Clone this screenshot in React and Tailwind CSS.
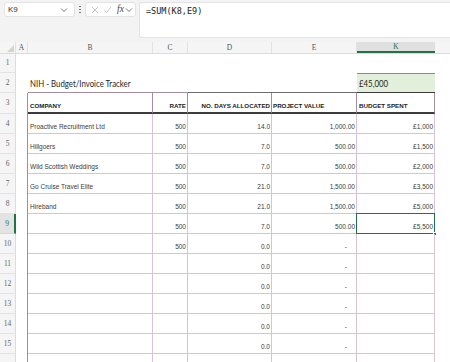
import React from "react";

const GRID = "grid grid-cols-[16px_12px_125px_35px_84px_85px_78px_1fr]";
const HL = "border-b border-[#d8c3d2]";
const VR = "border-r border-[#a48e9e]";

function Chevron({ className = "" }) {
  return (
    <svg width="8" height="6" viewBox="0 0 8 6" className={className}>
      <path d="M1 1.5 L4 4.5 L7 1.5" fill="none" stroke="#666" strokeWidth="0.9" />
    </svg>
  );
}

function TopBar() {
  return (
    <div className="h-[42px] bg-[#f3f3f3] flex items-start pt-[2px] pl-[4px] text-[8px] leading-none">
      <div className="w-[71px] h-[15px] bg-white border border-[#e3e3e3] rounded-[3px] flex items-center justify-between pl-[3px] pr-[6px]">
        <span className="text-[8px] leading-none text-[#333] font-['Liberation_Sans',sans-serif]">K9</span>
        <Chevron />
      </div>
      <div className="w-[8px] h-[15px] flex flex-col items-center justify-center gap-[1.5px] ml-[1px]">
        <span className="w-[1.5px] h-[1.5px] bg-[#666] rounded-full" />
        <span className="w-[1.5px] h-[1.5px] bg-[#666] rounded-full" />
        <span className="w-[1.5px] h-[1.5px] bg-[#666] rounded-full" />
      </div>
      <div className="w-[51px] h-[15px] bg-white border border-[#e3e3e3] rounded-[3px] flex items-center pl-[5px] ml-[1px]">
        <svg width="8" height="8" viewBox="0 0 8 8">
          <path d="M1 1 L7 7 M7 1 L1 7" stroke="#b8b8b8" strokeWidth="0.8" />
        </svg>
        <svg width="9" height="8" viewBox="0 0 9 8" className="ml-[4px]">
          <path d="M1 4.2 L3.4 6.8 L8 1" fill="none" stroke="#b8b8b8" strokeWidth="0.8" />
        </svg>
        <span className="ml-[5px] text-[9.5px] italic text-[#444] font-['Liberation_Serif',serif] leading-none">
          fx
        </span>
        <Chevron className="ml-[1px]" />
      </div>
      <div className="flex-1 h-[36px] bg-white border border-r-0 border-[#e3e3e3] rounded-l-[3px] ml-[3px] pl-[6px] pt-[4px] text-[8px] leading-none">
        <span className="text-[8.5px] leading-none text-[#222] font-['DejaVu_Sans_Mono',monospace]">=SUM(K8,E9)</span>
      </div>
    </div>
  );
}

function ColHeader() {
  const base =
    "h-[11px] flex items-center justify-center text-[7.5px] leading-none text-[#555] font-['Liberation_Serif',serif] border-r border-[#e2e2e2]";
  return (
    <div className={`${GRID} bg-[#f5f5f5] border-b border-[#dcdcdc]`}>
      <div className="h-[11px] relative border-r border-[#e2e2e2]">
        <svg width="7" height="7" viewBox="0 0 7 7" className="absolute right-[1px] bottom-[1px]">
          <path d="M7 0 L7 7 L0 7 Z" fill="#d4d4d4" />
        </svg>
      </div>
      <div className={base}>A</div>
      <div className={base}>B</div>
      <div className={base}>C</div>
      <div className={base}>D</div>
      <div className={base}>E</div>
      <div className="h-[11px] flex items-center justify-center text-[7.5px] leading-none text-[#217346] font-['Liberation_Serif',serif] bg-[#e0e0e0] border-b-2 border-[#217346]">
        K
      </div>
      <div className="h-[11px]" />
    </div>
  );
}

function RowHead({ n, sel, h }) {
  return (
    <div
      className={`${h} flex items-center justify-center text-[7.5px] leading-none font-['Liberation_Serif',serif] border-b ${
        sel
          ? "bg-[#e3e3e3] text-[#217346] border-r-2 border-r-[#217346] border-b-[#d6d6d6]"
          : "bg-[#f5f5f5] text-[#666] border-r border-r-[#dcdcdc] border-b-[#e3e3e3]"
      }`}
    >
      {n}
    </div>
  );
}

const data = [
  ["Proactive Recruitment Ltd", "500", "14.0", "1,000.00", "£1,000"],
  ["Hillgoers", "500", "7.0", "500.00", "£1,500"],
  ["Wild Scottish Weddings", "500", "7.0", "500.00", "£2,000"],
  ["Go Cruise Travel Elite", "500", "21.0", "1,500.00", "£3,500"],
  ["Hireband", "500", "21.0", "1,500.00", "£5,000"],
  ["", "500", "7.0", "500.00", "£5,500"],
  ["", "500", "0.0", "-", ""],
  ["", "", "0.0", "-", ""],
  ["", "", "0.0", "-", ""],
  ["", "", "0.0", "-", ""],
  ["", "", "0.0", "-", ""],
  ["", "", "0.0", "-", ""],
];

const cellText = "text-[6.5px] text-[#3a3a3a] font-['Liberation_Sans',sans-serif] leading-none whitespace-nowrap";

function DataRow({ row, n, label = true }) {
  const sel = n === 9;
  const [b, c, d, e, k] = row;
  const cell = `h-[20px] flex items-end pb-[3px] ${HL} ${VR} ${cellText}`;
  return (
    <div className={GRID}>
      <RowHead n={label ? n : ""} sel={sel} h="h-[20px]" />
      <div className={`h-[20px] ${VR}`} />
      <div className={`${cell} pl-[2px]`}>{b}</div>
      <div className={`${cell} justify-end pr-[1px]`}>{c}</div>
      <div className={`${cell} justify-end pr-[1px]`}>{d}</div>
      <div className={`${cell} justify-end ${e === "-" ? "pr-[9px]" : "pr-[1px]"}`}>{e}</div>
      <div className={`${cell} justify-end pr-[1px] relative`}>
        {k}
        {sel && (
          <>
            <div className="absolute left-[-1px] top-[-1px] right-[-1px] bottom-[-1px] border border-[#217346]" />
            <div className="absolute right-[-3px] bottom-[-3px] w-[4px] h-[4px] bg-[#217346] border border-white" />
          </>
        )}
      </div>
      <div className="h-[20px]" />
    </div>
  );
}

export default function App() {
  const title =
    "inline-block origin-left scale-x-[0.8] text-[9.8px] text-[#1f1f1f] font-['Lato',sans-serif] leading-none whitespace-nowrap";
  const head =
    "h-[21px] flex items-end pb-[3px] text-[6.2px] font-bold text-[#222] font-['Liberation_Sans',sans-serif] leading-none whitespace-nowrap border-b-2 border-b-[#3c3c3c] border-r border-r-[#a48e9e]";
  return (
    <div className="w-[450px] h-[362px] overflow-hidden bg-white">
      <TopBar />
      <ColHeader />
      {/* Row 1 */}
      <div className={GRID}>
        <RowHead n={1} h="h-[19px]" />
        <div className="h-[19px] col-span-7" />
      </div>
      {/* Row 2 */}
      <div className={GRID}>
        <RowHead n={2} h="h-[20px]" />
        <div className="h-[20px]" />
        <div className="h-[20px] flex items-end pb-[3px] pl-[2px] border-b border-[#a48e9e]">
          <span className={title}>NIH - Budget/Invoice Tracker</span>
        </div>
        <div className="h-[20px] border-b border-[#a48e9e]" />
        <div className="h-[20px] border-b border-[#6e6e6e]" />
        <div className="h-[20px] border-b border-[#6e6e6e]" />
        <div className="h-[20px] flex items-end pb-[3px] pl-[2px] bg-[#e2efda] border-t border-t-[#8a8a8a] border-b border-b-[#3c3c3c]">
          <span className={title}>£45,000</span>
        </div>
        <div className="h-[20px]" />
      </div>
      {/* Row 3 */}
      <div className={GRID}>
        <RowHead n={3} h="h-[21px]" />
        <div className="h-[21px] border-r border-[#a48e9e]" />
        <div className={`${head} pl-[2px]`}>COMPANY</div>
        <div className={`${head} justify-end pr-[1px]`}>RATE</div>
        <div className={`${head} justify-end pr-[1px]`}>NO. DAYS ALLOCATED</div>
        <div className={`${head} pl-[1px]`}>PROJECT VALUE</div>
        <div className={`${head} pl-[2px]`}>BUDGET SPENT</div>
        <div className="h-[21px]" />
      </div>
      {data.map((r, i) => (
        <DataRow key={i} row={r} n={i + 4} />
      ))}
      <DataRow row={["", "", "", "", ""]} n={16} label={false} />
    </div>
  );
}
